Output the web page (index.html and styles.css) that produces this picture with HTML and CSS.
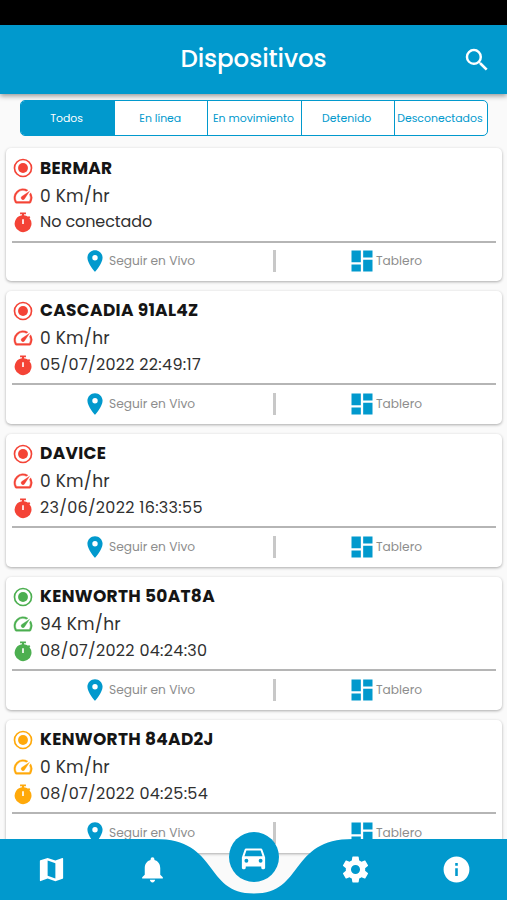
FILE: index.html
```
<!DOCTYPE html>
<html lang="es">
<head>
<meta charset="utf-8">
<meta name="viewport" content="width=device-width, initial-scale=1">
<title>Dispositivos</title>
<link rel="stylesheet" href="styles.css">
</head>
<body>
<svg class="sprite" aria-hidden="true">
  <symbol id="radio" viewBox="0 0 24 24"><circle cx="12" cy="12" r="9.3" fill="none" stroke="currentColor" stroke-width="1.8"/><circle cx="12" cy="12" r="5.4"/></symbol>
  <symbol id="speed" viewBox="0 0 24 24"><path stroke="currentColor" stroke-width=".4" d="M20.38 8.57l-1.23 1.85a8 8 0 0 1-.22 7.58H5.07A8 8 0 0 1 15.58 6.85l1.85-1.23A10 10 0 0 0 3.35 19a2 2 0 0 0 1.72 1h13.85a2 2 0 0 0 1.74-1 10 10 0 0 0-.27-10.44zm-9.79 6.84a2 2 0 0 0 2.83 0l5.66-8.49-8.49 5.66a2 2 0 0 0 0 2.83z"/></symbol>
  <symbol id="timer" viewBox="0 0 24 24"><path fill-rule="evenodd" d="M8.800 1.500h6.400v2h-2.100v1.200c1.700.2 3.200.8 4.500 1.700l1-1 1.400 1.400-.9 1.100A9.200 9.200 0 1 1 10.900 4.700V3.500H8.800zM11.100 9v5.300h1.800V9z"/></symbol>
  <symbol id="pin" viewBox="0 0 24 24"><path d="M12 2C8.130 2 5 5.130 5 9c0 5.250 7 13 7 13s7-7.750 7-13c0-3.870-3.130-7-7-7zm0 9.500a2.500 2.500 0 1 1 0-5 2.500 2.500 0 0 1 0 5z"/></symbol>
  <symbol id="board" viewBox="0 0 24 24"><path d="M3 13h8V3H3v10zm0 8h8v-6H3v6zm10 0h8V11h-8v10zm0-18v6h8V3h-8z"/></symbol>
</svg>

<div class="statusbar"></div>
<header class="appbar">
  <h1>Dispositivos</h1>
  <svg class="search" viewBox="0 0 24 24"><path d="M15.500 14h-.79l-.28-.27A6.471 6.471 0 0 0 16 9.500 6.500 6.500 0 1 0 9.500 16c1.610 0 3.090-.59 4.230-1.570l.27.28v.79l5 4.990L20.490 19l-4.990-5zm-6 0C7.010 14 5 11.990 5 9.500S7.010 5 9.500 5 14 7.010 14 9.500 11.990 14 9.500 14z"/></svg>
</header>

<nav class="tabs">
  <a class="tab active">Todos</a><a class="tab">En línea</a><a class="tab">En movimiento</a><a class="tab">Detenido</a><a class="tab">Desconectados</a>
</nav>

<main class="list">
  <article class="card red">
    <div class="row name"><svg><use href="#radio"/></svg><b>BERMAR</b></div>
    <div class="row speed"><svg><use href="#speed"/></svg><span>0 Km/hr</span></div>
    <div class="row time"><svg><use href="#timer"/></svg><span class="words">No conectado</span></div>
    <div class="actions"><a class="follow"><svg><use href="#pin"/></svg><span>Seguir en Vivo</span></a><i></i><a class="board"><svg><use href="#board"/></svg><span>Tablero</span></a></div>
  </article>
  <article class="card red">
    <div class="row name"><svg><use href="#radio"/></svg><b>CASCADIA 91AL4Z</b></div>
    <div class="row speed"><svg><use href="#speed"/></svg><span>0 Km/hr</span></div>
    <div class="row time"><svg><use href="#timer"/></svg><span>05/07/2022 22:49:17</span></div>
    <div class="actions"><a class="follow"><svg><use href="#pin"/></svg><span>Seguir en Vivo</span></a><i></i><a class="board"><svg><use href="#board"/></svg><span>Tablero</span></a></div>
  </article>
  <article class="card red">
    <div class="row name"><svg><use href="#radio"/></svg><b>DAVICE</b></div>
    <div class="row speed"><svg><use href="#speed"/></svg><span>0 Km/hr</span></div>
    <div class="row time"><svg><use href="#timer"/></svg><span>23/06/2022 16:33:55</span></div>
    <div class="actions"><a class="follow"><svg><use href="#pin"/></svg><span>Seguir en Vivo</span></a><i></i><a class="board"><svg><use href="#board"/></svg><span>Tablero</span></a></div>
  </article>
  <article class="card green">
    <div class="row name"><svg><use href="#radio"/></svg><b>KENWORTH 50AT8A</b></div>
    <div class="row speed"><svg><use href="#speed"/></svg><span>94 Km/hr</span></div>
    <div class="row time"><svg><use href="#timer"/></svg><span>08/07/2022 04:24:30</span></div>
    <div class="actions"><a class="follow"><svg><use href="#pin"/></svg><span>Seguir en Vivo</span></a><i></i><a class="board"><svg><use href="#board"/></svg><span>Tablero</span></a></div>
  </article>
  <article class="card amber">
    <div class="row name"><svg><use href="#radio"/></svg><b>KENWORTH 84AD2J</b></div>
    <div class="row speed"><svg><use href="#speed"/></svg><span>0 Km/hr</span></div>
    <div class="row time"><svg><use href="#timer"/></svg><span>08/07/2022 04:25:54</span></div>
    <div class="actions"><a class="follow"><svg><use href="#pin"/></svg><span>Seguir en Vivo</span></a><i></i><a class="board"><svg><use href="#board"/></svg><span>Tablero</span></a></div>
  </article>
</main>

<nav class="bottombar">
  <svg class="wave" viewBox="0 0 507 61"><path d="M0 0H155C220 0 203 54.500 254 54.500S288 0 353 0H507V61H0z"/></svg>
  <div class="items">
    <a><svg viewBox="0 0 24 24"><path d="M20.500 3l-.16.03L15 5.100 9 3 3.360 4.900c-.21.07-.36.25-.36.48V20.500c0 .28.22.5.5.5l.16-.03L9 18.900l6 2.100 5.640-1.900c.21-.07.36-.25.36-.48V3.500c0-.28-.22-.5-.5-.5zM15 19l-6-2.110V5l6 2.110V19z"/></svg></a>
    <a><svg viewBox="0 0 24 24"><path d="M12 22c1.100 0 2-.9 2-2h-4c0 1.100.89 2 2 2zm6-6v-5c0-3.070-1.640-5.640-4.500-6.320V4a1.500 1.500 0 0 0-3 0v.68C7.630 5.360 6 7.920 6 11v5l-2 2v1h16v-1l-2-2z"/></svg></a>
    <a class="current"><svg viewBox="0 0 24 24"><path d="M18.920 6.010C18.720 5.420 18.160 5 17.500 5h-11c-.66 0-1.210.42-1.420 1.010L3 12v8c0 .55.45 1 1 1h1c.55 0 1-.45 1-1v-1h12v1c0 .55.45 1 1 1h1c.55 0 1-.45 1-1v-8l-2.080-5.990zM6.500 16a1.500 1.500 0 1 1 0-3 1.500 1.500 0 0 1 0 3zm11 0a1.500 1.500 0 1 1 0-3 1.500 1.500 0 0 1 0 3zM5 11l1.500-4.500h11L19 11H5z"/></svg></a>
    <a><svg viewBox="0 0 24 24"><path d="M19.430 12.980c.04-.32.07-.64.07-.98s-.03-.66-.07-.98l2.110-1.650c.19-.15.24-.42.12-.64l-2-3.460c-.12-.22-.39-.3-.61-.22l-2.490 1c-.52-.4-1.080-.73-1.690-.98l-.38-2.650C14.460 2.180 14.250 2 14 2h-4c-.25 0-.46.18-.49.42l-.38 2.650c-.61.25-1.170.59-1.690.98l-2.490-1c-.23-.09-.49 0-.61.22l-2 3.460c-.13.22-.07.49.12.64l2.110 1.650c-.04.32-.07.65-.07.98s.03.66.07.98l-2.110 1.650c-.19.15-.24.42-.12.64l2 3.460c.12.22.39.3.61.22l2.490-1c.52.4 1.080.73 1.690.98l.38 2.650c.03.24.24.42.49.42h4c.25 0 .46-.18.49-.42l.38-2.650c.61-.25 1.170-.59 1.690-.98l2.490 1c.23.09.49 0 .61-.22l2-3.460c.12-.22.07-.49-.12-.64l-2.110-1.650zM12 15.500a3.500 3.500 0 1 1 0-7 3.500 3.500 0 0 1 0 7z"/></svg></a>
    <a><svg viewBox="0 0 24 24"><path d="M12 2a10 10 0 1 0 0 20 10 10 0 0 0 0-20zm1 15h-2v-6h2v6zm0-8h-2V7h2v2z"/></svg></a>
  </div>
</nav>
</body>
</html>
```

FILE: styles.css
```
* { box-sizing: border-box; }
body {
  margin: 0;
  height: 900px;
  overflow: hidden;
  background: #fafafa;
  font-family: Poppins, Inter, "Open Sans", sans-serif;
  color: #303030;
}
svg { fill: currentColor; flex: none; display: block; }
.sprite { width: 0; height: 0; position: absolute; }
.statusbar { height: 25px; background: #000; }
.appbar {
  height: 69px;
  background: #0199cd;
  color: #fff;
  display: grid;
  grid-template-columns: 60px 1fr 60px;
  align-items: center;
  box-shadow: 0 2px 5px rgba(0, 0, 0, .4);
}
.appbar h1 {
  grid-column: 2;
  margin: 0 0 2px;
  text-align: center;
  font-size: 24.500px;
  line-height: 36px;
  font-weight: 500;
  letter-spacing: -.08px;
}
.search { width: 30px; height: 30px; margin-left: 15px; }

.tabs {
  display: grid;
  grid-template-columns: repeat(5, 1fr);
  width: 468px;
  height: 36px;
  margin: 6px 0 0 20px;
  border: 1px solid #0199cd;
  border-radius: 5px;
  background: #fff;
  overflow: hidden;
}
.tab {
  display: flex;
  align-items: center;
  justify-content: center;
  min-width: 0;
  padding: 1px 2px 0 0;
  font-size: 10.900px;
  color: #0199cd;
  white-space: nowrap;
  border-left: 1px solid #0199cd;
}
.tab:first-child { border-left: 0; }
.tab.active { background: #0199cd; color: #fff; }

.list { padding: 12px 5px 0 6px; }
.card {
  height: 133px;
  margin-bottom: 9.900px;
  padding: 7px 6px 0;
  background: #fff;
  border-radius: 5px;
  box-shadow: 0 1px 3px rgba(0, 0, 0, .32);
}
.row { display: flex; align-items: center; gap: 6px; white-space: nowrap; }
.row svg { width: 22px; height: 22px; }
.row span, .row b { color: #303030; font-size: 17px; letter-spacing: .24px; }
.row b { color: #151515; font-weight: 700; letter-spacing: .3px; }
.name { height: 26px; }
.name b { margin-top: -1px; }
.speed { height: 29px; }
.time { height: 24px; }
.time span { font-size: 16px; letter-spacing: .3px; margin-top: -1px; }
.time .words { letter-spacing: -.1px; }
.red { color: #f44336; }
.green { color: #4caf50; }
.amber { color: #ffa90a; }

.actions {
  display: grid;
  grid-template-columns: 261px 3px 1fr;
  align-items: center;
  height: 39px;
  margin-top: 6.600px;
  border-top: 2px solid #b5b5b5;
  color: #0199cd;
}
.actions a { display: flex; align-items: center; }
.actions i { width: 3px; height: 22px; background: #c8c8c8; }
.actions span { color: #8d8d8d; font-size: 12.200px; white-space: nowrap; }
.follow { padding-left: 70px; }
.follow svg { width: 26px; height: 26px; margin-right: 1px; }
.board { padding-left: 72px; }
.board svg { width: 28px; height: 28px; }

.bottombar { position: fixed; left: 0; bottom: 0; width: 507px; height: 61px; color: #0199cd; }
.wave { width: 507px; height: 61px; }
.items {
  position: absolute;
  inset: 0;
  display: grid;
  grid-template-columns: repeat(5, 1fr);
  grid-template-rows: 61px;
  justify-items: center;
  align-items: center;
  padding-left: 1px;
  color: #fff;
}
.items svg { width: 31px; height: 31px; }
.current {
  display: grid;
  place-items: center;
  align-self: start;
  width: 50px;
  height: 50px;
  border-radius: 50%;
  background: #0199cd;
  margin-top: -7px;
}
```
